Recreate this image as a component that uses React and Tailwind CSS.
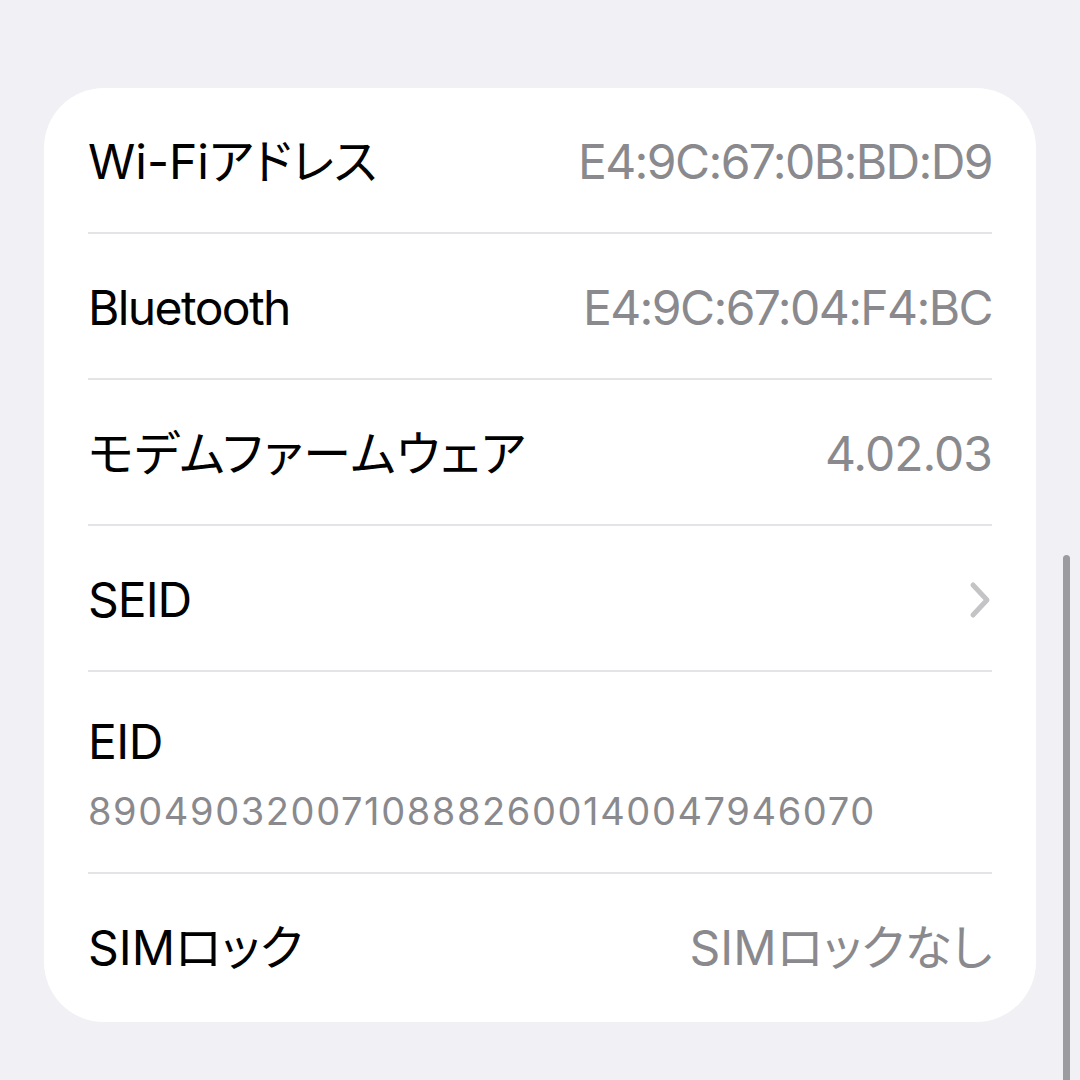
import React from "react";

const font = {
  fontFamily: '"Inter", "Noto Sans CJK JP", sans-serif',
};

function Row({ label, value, chevron, labelTrack = "tracking-[-0.5px]", valueTrack = "tracking-[-1.6px]" }) {
  return (
    <div className="flex h-[144px] items-center justify-between pt-[3px]">
      <span className={"text-[48px] leading-none text-black " + labelTrack} style={{ fontFeatureSettings: '"palt"' }}>{label}</span>
      {value && <span className={"text-[48px] leading-none text-[#8a8a8e] " + valueTrack} style={{ fontFeatureSettings: '"palt"' }}>{value}</span>}
      {chevron && (
        <svg width="22" height="38" viewBox="0 0 22 38" className="mr-[1px]">
          <path d="M4 4 L18 19 L4 34" fill="none" stroke="#c4c4c7" strokeWidth="5" strokeLinecap="round" strokeLinejoin="round" />
        </svg>
      )}
    </div>
  );
}

function Divider() {
  return <div className="h-[2px] bg-[#e4e4e8]" />;
}

export default function App() {
  return (
    <div className="relative h-[1080px] w-[1080px] overflow-hidden bg-[#f0f0f5] pt-[88px] pl-[44px]" style={font}>
      <div className="w-[992px] rounded-[60px] bg-white px-[44px]">
        <Row label="Wi-Fiアドレス" labelTrack="tracking-[0px]" value="E4:9C:67:0B:BD:D9" />
        <Divider />
        <Row label="Bluetooth" labelTrack="tracking-[-1.6px]" value="E4:9C:67:04:F4:BC" />
        <Divider />
        <Row label="モデムファームウェア" labelTrack="tracking-[1px]" value="4.02.03" valueTrack="tracking-[-1px]" />
        <Divider />
        <Row label="SEID" labelTrack="tracking-[-1px]" chevron />
        <Divider />
        <div className="flex h-[200px] flex-col justify-center pt-[3px]">
          <span className="text-[48px] leading-none text-black tracking-[-0.5px]">EID</span>
          <span className="mt-[26px] text-[38px] leading-none text-[#8a8a8e] tracking-[1.6px]">89049032007108882600140047946070</span>
        </div>
        <Divider />
        <div className="flex h-[148px] items-center justify-between">
          <span className="text-[48px] leading-none text-black" style={{ fontFeatureSettings: '"palt"' }}>SIMロック</span>
          <span className="text-[48px] leading-none text-[#8a8a8e]" style={{ fontFeatureSettings: '"palt"' }}>SIMロックなし</span>
        </div>
      </div>
      <div className="absolute left-[1063px] top-[555px] h-[560px] w-[7px] rounded-full bg-[#9c9ca0]" />
    </div>
  );
}
